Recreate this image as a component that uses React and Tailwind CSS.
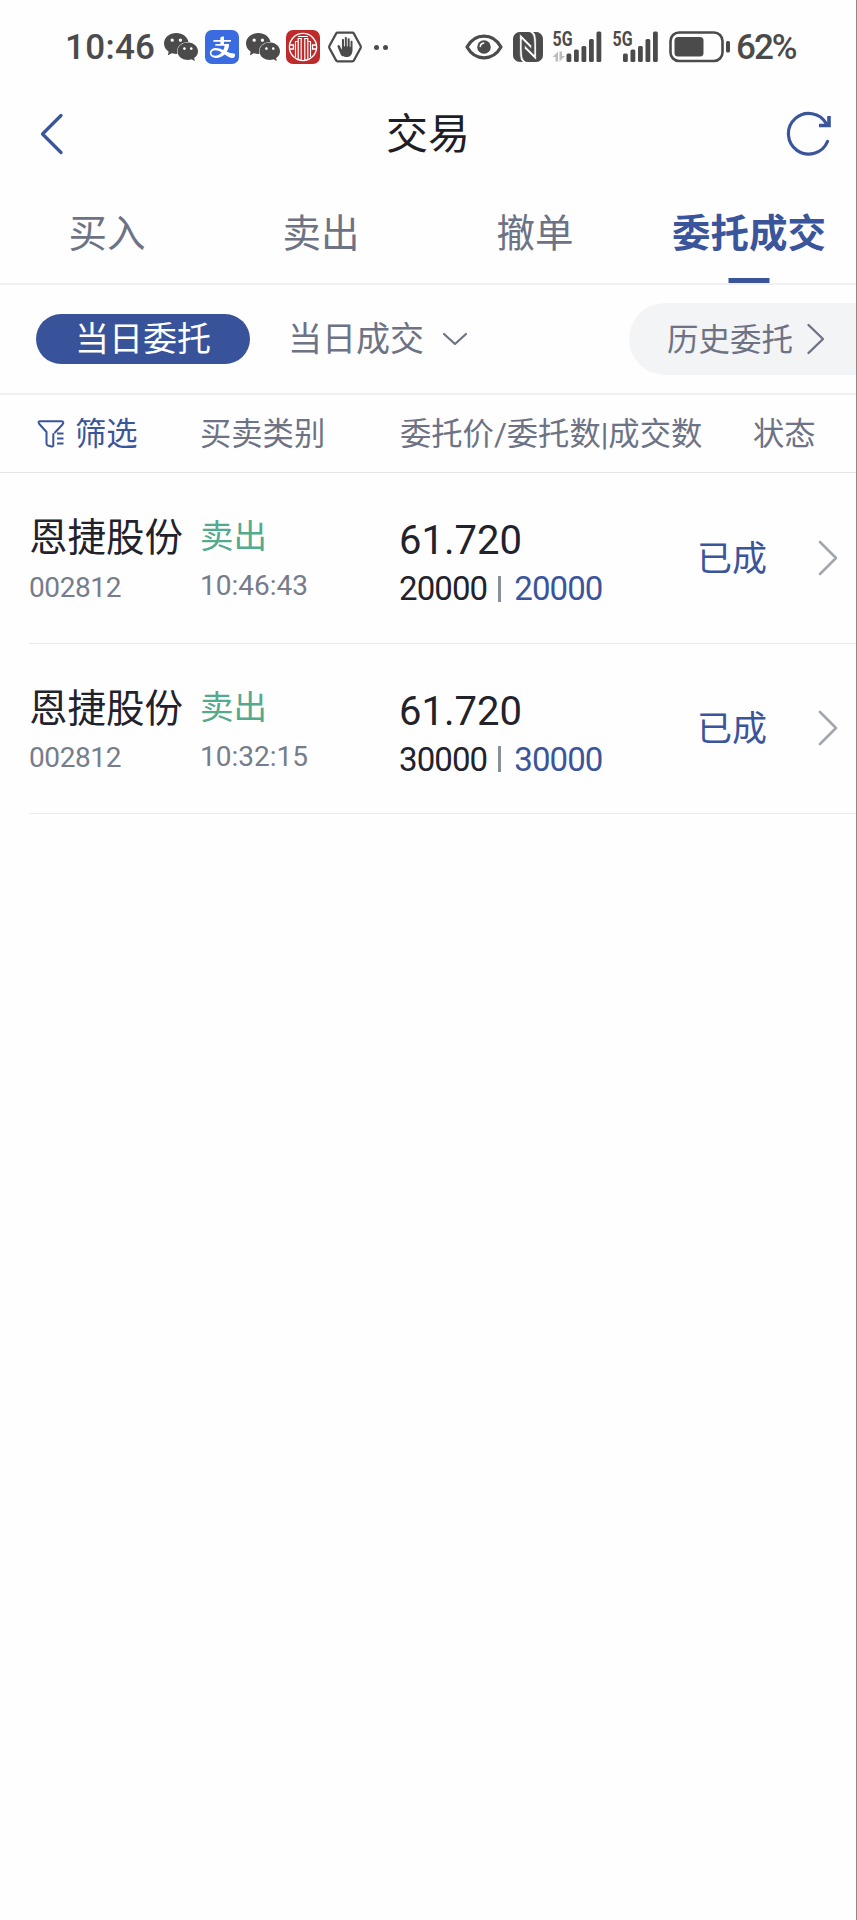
import React from "react";
import { AiFillAlipaySquare } from "react-icons/ai";
import { SiNfc, SiWechat } from "react-icons/si";
import { IoHandLeft } from "react-icons/io5";

const INK = "#4b4b4b";

function CiticIcon() {
  return (
    <svg viewBox="0 0 34 34" className="size-[34px] shrink-0" fill="none" stroke="#fff">
      <rect width="34" height="34" rx="7" fill="#bf2a2b" stroke="none" />
      <circle cx="17" cy="17" r="13.6" strokeWidth="1.4" />
      <path d="M12.2 29.500V8.500H15.200V30M21.800 29.500V8.500H18.800V30" strokeWidth="1.200" />
      <path d="M9.500 27V11.500H12M24.500 27V11.500H22" strokeWidth="1.100" />
      <path d="M4 15H7.500V19H4M30 15H26.500V19H30" strokeWidth="1.300" />
      <path d="M12 6.500H22" strokeWidth="1" />
    </svg>
  );
}

function HandIcon() {
  return (
    <span className="relative flex h-8 w-[34px] shrink-0 items-center justify-center">
      <svg viewBox="0 0 34 32" className="absolute inset-0 h-8 w-[34px]" fill="none" stroke={INK} strokeWidth="2.2" strokeLinejoin="round">
        <path d="M9.6 1.7h14.8q1 0 1.5.9l6.6 12.1q.6 1.3 0 2.6l-6.6 12.1q-.5.9-1.5.9H9.6q-1 0-1.5-.9L1.5 17.3q-.6-1.3 0-2.6L8.1 2.6q.5-.9 1.5-.9z" />
      </svg>
      <IoHandLeft className="size-[20px] -scale-x-100" />
    </span>
  );
}

function EyeIcon() {
  return (
    <svg viewBox="0 0 38 26" className="h-[26px] w-[38px] shrink-0" fill="none" stroke={INK}>
      <path d="M2 13C6 6 12 2.2 19 2.2S32 6 36 13C32 20 26 23.8 19 23.8S6 20 2 13z" strokeWidth="3.2" strokeLinejoin="round" />
      <circle cx="19" cy="13" r="6.8" fill={INK} stroke="none" />
      <path d="M15.200 12.500a4 4 0 0 1 3.500-3.500" stroke="#fff" strokeWidth="1.4" strokeLinecap="round" />
    </svg>
  );
}

function Signal({ data }) {
  return (
    <svg viewBox="0 -6 50 44" className="h-11 w-[50px] shrink-0" fill={INK}>
      <text x="0.500" y="14.500" fontFamily="Roboto, sans-serif" fontWeight="700" fontSize="19.5" textLength="20" lengthAdjust="spacingAndGlyphs">5G</text>
      {data && <path d="M0.500 26L6 20.500V30.500H3.500V26zM7.500 20.500V30.500L13 25H10V20.500z" fill="#bdbdbd" />}
      <g transform={data ? undefined : "translate(-3.500 0)"}>
        <rect x="14.500" y="22.500" width="4.800" height="8.500" rx="1.500" />
        <rect x="22" y="18.500" width="4.800" height="12.500" rx="1.500" />
        <rect x="29.500" y="15" width="4.800" height="16" rx="1.500" />
        <rect x="37" y="8" width="4.800" height="23" rx="1.500" />
        <rect x="44.500" y="0.500" width="4.800" height="30.500" rx="1.500" />
      </g>
    </svg>
  );
}

function Battery() {
  return (
    <svg viewBox="0 0 62 32" className="h-8 w-[62px] shrink-0" fill="none">
      <rect x="1.500" y="1.500" width="52" height="28.500" rx="8.500" stroke={INK} strokeWidth="2.600" />
      <rect x="5.500" y="6" width="29" height="19.500" rx="3.500" fill={INK} />
      <rect x="57" y="10" width="4" height="11.500" rx="1.500" fill={INK} />
    </svg>
  );
}

function StatusBar() {
  return (
    <div className="flex h-[94px] items-center pl-[65px] text-[#4b4b4b]">
      <span className="w-[99px] text-[35px] leading-none font-medium tracking-[0.3px]">10:46</span>
      <SiWechat className="size-[34px] shrink-0" />
      <span className="ml-[7px] flex size-[34px] shrink-0 items-center justify-center overflow-hidden rounded-[7px] bg-white text-[#3b6be0]">
        <AiFillAlipaySquare className="size-[45px] shrink-0" />
      </span>
      <SiWechat className="ml-[7px] size-[34px] shrink-0" />
      <span className="ml-[6px] flex"><CiticIcon /></span>
      <span className="ml-[8px] flex"><HandIcon /></span>
      <span className="ml-[12px] flex gap-[4px]">
        <i className="size-[5px] rounded-full bg-[#4b4b4b]" />
        <i className="size-[5px] rounded-full bg-[#4b4b4b]" />
      </span>
      <div className="mr-[58px] ml-auto flex items-center">
        <EyeIcon />
        <span className="ml-[10px] flex size-[30px] overflow-hidden rounded-[7px]">
          <SiNfc className="size-[30px] stroke-current" strokeWidth="0.7" />
        </span>
        <span className="ml-[9px] flex"><Signal data /></span>
        <span className="ml-[10px] flex"><Signal /></span>
        <span className="ml-[7px] flex"><Battery /></span>
        <span className="ml-[5px] w-[62px] text-[35px] leading-none font-medium tracking-[-2px]">62%</span>
      </div>
    </div>
  );
}

function Header() {
  return (
    <header className="flex h-[80px] items-center justify-between pr-[24px] pl-[39px]">
      <svg viewBox="0 0 25 42" className="h-[42px] w-[25px]" fill="none" stroke="#3a559b" strokeWidth="3.200" strokeLinecap="round" strokeLinejoin="round">
        <path d="M22 2.500L3.500 21L22 39.500" />
      </svg>
      <h1 className="mt-[2px] ml-[6px] text-[42px] leading-none font-normal text-[#1e1e28]">交易</h1>
      <svg viewBox="0 0 46 46" className="size-[46px]" fill="none" stroke="#3a559b" strokeWidth="3.200">
        <path d="M41.500 30.500A20.300 20.300 0 1 1 40.500 13" strokeLinecap="round" />
        <path d="M33 14.500H43V5" strokeWidth="3.600" />
      </svg>
    </header>
  );
}

const tabs = ["买入", "卖出", "撤单", "委托成交"];

function Tabs() {
  return (
    <nav className="grid h-[111px] grid-cols-4 border-b-2 border-[#f1f1f3]">
      {tabs.map((tab, i) => (
        <div
          key={tab}
          className={
            i === 3
              ? "relative flex items-center justify-center pt-[11px] text-[38.500px] leading-none font-bold text-[#3a559b]"
              : "flex items-center justify-center pt-[11px] text-[38.500px] leading-none text-[#6d7385]"
          }
        >
          {tab}
          {i === 3 && <i className="absolute bottom-0 left-1/2 h-[5px] w-[41px] -translate-x-1/2 bg-[#3a559b]" />}
        </div>
      ))}
    </nav>
  );
}

function Filters() {
  return (
    <div className="flex h-[110px] items-center border-b-2 border-[#f1f1f3] pl-[36px] text-[34px] leading-none text-[#6d7385]">
      <span className="flex h-[50px] w-[214px] items-center justify-center rounded-full bg-[#385399] text-white">当日委托</span>
      <span className="ml-[38px]">当日成交</span>
      <svg viewBox="0 0 26 14" className="ml-[18px] h-[14px] w-[26px]" fill="none" stroke="#6d7385" strokeWidth="2.200" strokeLinecap="round" strokeLinejoin="round">
        <path d="M2 2L13 12L24 2" />
      </svg>
      <div className="ml-auto flex h-[72px] w-[227px] items-center rounded-l-full bg-[#f3f4f6] pl-[38px] text-[31.500px]">
        <span className="pt-[3px]">历史委托</span>
        <svg viewBox="0 0 20 32" className="ml-[13px] h-8 w-5" fill="none" stroke="#6d7385" strokeWidth="2.400" strokeLinecap="round" strokeLinejoin="round">
          <path d="M2.500 2L17 16L2.500 30" />
        </svg>
      </div>
    </div>
  );
}

function TableHead() {
  return (
    <div className="flex h-[78px] items-center border-b border-[#e6e6e9] pt-[2px] pl-[37px] text-[31.300px] leading-none whitespace-nowrap text-[#6d7385]">
      <div className="flex w-[163px] items-center text-[#3a559b]">
        <svg viewBox="0 0 28 28" className="mr-[10px] h-7 w-7" fill="none" stroke="#3a559b" strokeWidth="2" strokeLinecap="round" strokeLinejoin="round">
          <path d="M18 12.500L25.500 4.500Q27.500 1.300 24.500 1.300H3.500Q0.300 1.300 2.300 4L9.500 12V23.500Q9.500 25 11 25.500L14.500 26.500Q16.300 26.700 16.300 25V14" />
          <path d="M20 13.500H26.500M20 18.500H26.500M20 23.500H26.500" strokeLinecap="butt" />
        </svg>
        筛选
      </div>
      <div className="w-[200px]">买卖类别</div>
      <div className="w-[353px]">委托价/委托数|成交数</div>
      <div>状态</div>
    </div>
  );
}

const orders = [
  { name: "恩捷股份", code: "002812", side: "卖出", time: "10:46:43", price: "61.720", amount: "20000", filled: "20000", status: "已成" },
  { name: "恩捷股份", code: "002812", side: "卖出", time: "10:32:15", price: "61.720", amount: "30000", filled: "30000", status: "已成" },
];

function OrderRow({ order }) {
  return (
    <li className="ml-[29px] flex h-[170.500px] border-b border-[#e9e9ec] leading-none whitespace-nowrap">
      <div className="w-[171px] pt-[46px]">
        <div className="text-[38.500px] text-[#22222c]">{order.name}</div>
        <div className="mt-[16px] text-[28px] tracking-[-0.400px] text-[#777c8b]">{order.code}</div>
      </div>
      <div className="w-[199px] pt-[47px]">
        <div className="text-[33.500px] text-[#53aa8c]">{order.side}</div>
        <div className="mt-[18.500px] text-[28px] text-[#777c8b]">{order.time}</div>
      </div>
      <div className="w-[298px] pt-[48px]">
        <div className="text-[40px] text-[#22222c]">{order.price}</div>
        <div className="mt-[11px] flex items-center text-[33px] tracking-[-0.900px] text-[#22222c]">
          {order.amount}
          <i className="mr-[13px] ml-[11px] h-[26px] w-[3px] bg-[#8b8f9c]" />
          <span className="text-[#3a559b]">{order.filled}</span>
        </div>
      </div>
      <div className="flex w-[121px] items-center pt-[3px] text-[35px] text-[#3a559b]">{order.status}</div>
      <div className="flex items-center">
        <svg viewBox="0 0 20 36" className="h-9 w-5" fill="none" stroke="#a4a6ae" strokeWidth="2.600" strokeLinecap="round" strokeLinejoin="round">
          <path d="M2 2L18 18L2 34" />
        </svg>
      </div>
    </li>
  );
}

export default function App() {
  return (
    <main className="h-[1920px] w-[857px] overflow-hidden border-r border-[#8b8b8b] bg-[#fefefe] font-[Roboto,'Noto_Sans_CJK_SC',sans-serif]">
      <StatusBar />
      <Header />
      <Tabs />
      <Filters />
      <TableHead />
      <ul>
        {orders.map((order) => (
          <OrderRow key={order.time} order={order} />
        ))}
      </ul>
    </main>
  );
}
